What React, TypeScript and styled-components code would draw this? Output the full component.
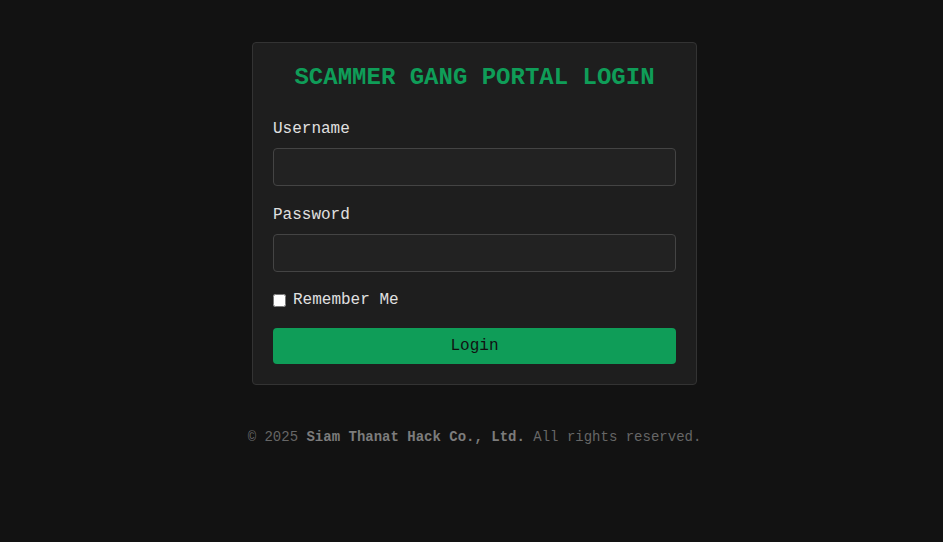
import React from "react";
import styled, { createGlobalStyle } from "styled-components";

const Global = createGlobalStyle`
  html, body {
    margin: 0;
    padding: 0;
    background: #121212;
    font-family: "Liberation Mono", "Courier New", monospace;
  }
  * { box-sizing: border-box; }
`;

const Page = styled.div`
  min-height: 542px;
  display: flex;
  flex-direction: column;
  align-items: center;
  padding: 42px 0 0 6px;
`;

const Card = styled.form`
  width: 445px;
  background: #1e1e1e;
  border: 1px solid #333;
  border-radius: 4px;
  padding: 20px;
  display: flex;
  flex-direction: column;
`;

const Title = styled.h2`
  margin: 1px 0 29px;
  text-align: center;
  color: #0f9d58;
  font-size: 24px;
  line-height: 27px;
  font-weight: bold;
`;

const Group = styled.div`
  display: flex;
  flex-direction: column;
  margin-bottom: 19.5px;
`;

const Label = styled.label`
  color: #e0e0e0;
  font-size: 16px;
  line-height: 18px;
  margin-bottom: 10px;
`;

const Input = styled.input`
  height: 38px;
  width: 100%;
  background: #222;
  border: 1px solid #444;
  border-radius: 4px;
  color: #eee;
  padding: 0 10px;
  font-family: inherit;
  font-size: 16px;
  outline: none;
`;

const CheckRow = styled.label`
  display: flex;
  align-items: center;
  gap: 7px;
  color: #e0e0e0;
  font-size: 16px;
  line-height: 18px;
  margin: 0 0 19px;
`;

const Check = styled.input`
  margin: 0;
  width: 13px;
  height: 13px;
`;

const Button = styled.button`
  height: 36px;
  width: 100%;
  border: none;
  border-radius: 4px;
  background: #0f9d58;
  color: #111;
  font-family: inherit;
  font-size: 16px;
  cursor: pointer;
`;

const Footer = styled.footer`
  margin-top: 44px;
  color: #666;
  font-size: 14px;
  line-height: 16px;
  text-align: center;
`;

const Company = styled.strong`
  color: #7c7c7c;
`;

export default function App() {
  return (
    <>
      <Global />
      <Page>
        <Card onSubmit={(e) => e.preventDefault()}>
          <Title>SCAMMER GANG PORTAL LOGIN</Title>
          <Group>
            <Label htmlFor="u">Username</Label>
            <Input id="u" type="text" />
          </Group>
          <Group>
            <Label htmlFor="p">Password</Label>
            <Input id="p" type="password" />
          </Group>
          <CheckRow>
            <Check type="checkbox" />
            Remember Me
          </CheckRow>
          <Button type="submit">Login</Button>
        </Card>
        <Footer>
          © 2025 <Company>Siam Thanat Hack Co., Ltd.</Company> All rights reserved.
        </Footer>
      </Page>
    </>
  );
}
